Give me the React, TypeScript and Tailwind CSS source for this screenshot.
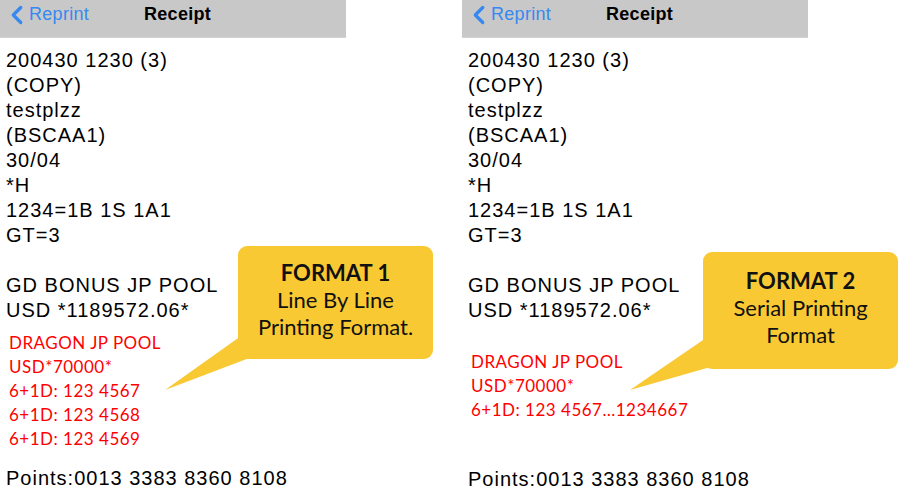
import { ChevronLeft } from "lucide-react";

type Bubble = {
  title: string;
  lines: string[];
  box: string;
  tail: string;
};

type PanelProps = {
  red: string[];
  redGap: string;
  pointsGap: string;
  bubble: Bubble;
};

const black = [
  "200430 1230 (3)",
  "(COPY)",
  "testplzz",
  "(BSCAA1)",
  "30/04",
  "*H",
  "1234=1B 1S 1A1",
  "GT=3",
];

const Panel = ({ red, redGap, pointsGap, bubble }: PanelProps) => {
  return (
    <div className="relative w-[346px] h-[500px]">
      <div className="h-[38px] bg-[#c8c8c8] border-b border-[#d4d4d4] flex items-center relative">
        <div className="flex items-center text-[#3589f0] text-[18px] pl-[6px] -mt-[8px]">
          <ChevronLeft size={30} strokeWidth={2.6} className="-ml-[4px]" />
          <span className="-ml-[3px] tracking-[0.3px]">Reprint</span>
        </div>
        <span className="absolute left-[144px] top-[1px] text-[18px] font-bold text-black tracking-[0.3px]">Receipt</span>
      </div>

      <div className="flex flex-col pl-[6px] pt-[10px] text-black">
        <div className="font-['Liberation_Sans',Arial,sans-serif] text-[20px] leading-[25px] tracking-[1px]">
          {black.map((l) => (
            <div key={l}>{l}</div>
          ))}
          <div className="h-[25px]" />
          <div>GD BONUS JP POOL</div>
          <div>USD *1189572.06*</div>
        </div>
        <div className={`${redGap} pl-[3px] font-['Lato',sans-serif] text-[17px] leading-[24px] text-[#ff0000] tracking-[0.5px]`}>
          {red.map((l) => (
            <div key={l}>{l}</div>
          ))}
        </div>
        <div className={`${pointsGap} font-['Liberation_Sans',Arial,sans-serif] text-[20px] leading-[25px] tracking-[1px]`}>
          Points:0013 3383 8360 8108
        </div>
      </div>

      <svg className="absolute inset-0 pointer-events-none overflow-visible" width="346" height="500">
        <polygon points={bubble.tail} fill="#f9c933" />
      </svg>
      <div
        className={`absolute ${bubble.box} bg-[#f9c933] rounded-[9px] pb-[6px] flex flex-col items-center justify-center font-['Lato',sans-serif] text-[#111] text-[22px] leading-[27px]`}
      >
        <div className="font-bold">{bubble.title}</div>
        {bubble.lines.map((l) => (
          <div key={l}>{l}</div>
        ))}
      </div>
    </div>
  );
};

export default function App() {
  return (
    <div className="w-[899px] h-[500px] bg-white overflow-hidden flex gap-[116px] font-['Liberation_Sans',Arial,sans-serif]">
      <Panel
        red={[
          "DRAGON JP POOL",
          "USD*70000*",
          "6+1D: 123 4567",
          "6+1D: 123 4568",
          "6+1D: 123 4569",
        ]}
        redGap="mt-[8px]"
        pointsGap="mt-[15px]"
        bubble={{
          title: "FORMAT 1",
          lines: ["Line By Line", "Printing Format."],
          box: "left-[238px] top-[246px] w-[195px] h-[113px]",
          tail: "241,336 165,390 252,357",
        }}
      />
      <Panel
        red={["DRAGON JP POOL", "USD*70000*", "6+1D: 123 4567…1234667"]}
        redGap="mt-[27px]"
        pointsGap="mt-[45px]"
        bubble={{
          title: "FORMAT 2",
          lines: ["Serial Printing", "Format"],
          box: "left-[241px] top-[252px] w-[195px] h-[117px]",
          tail: "244,338 168,390 252,366",
        }}
      />
    </div>
  );
}
